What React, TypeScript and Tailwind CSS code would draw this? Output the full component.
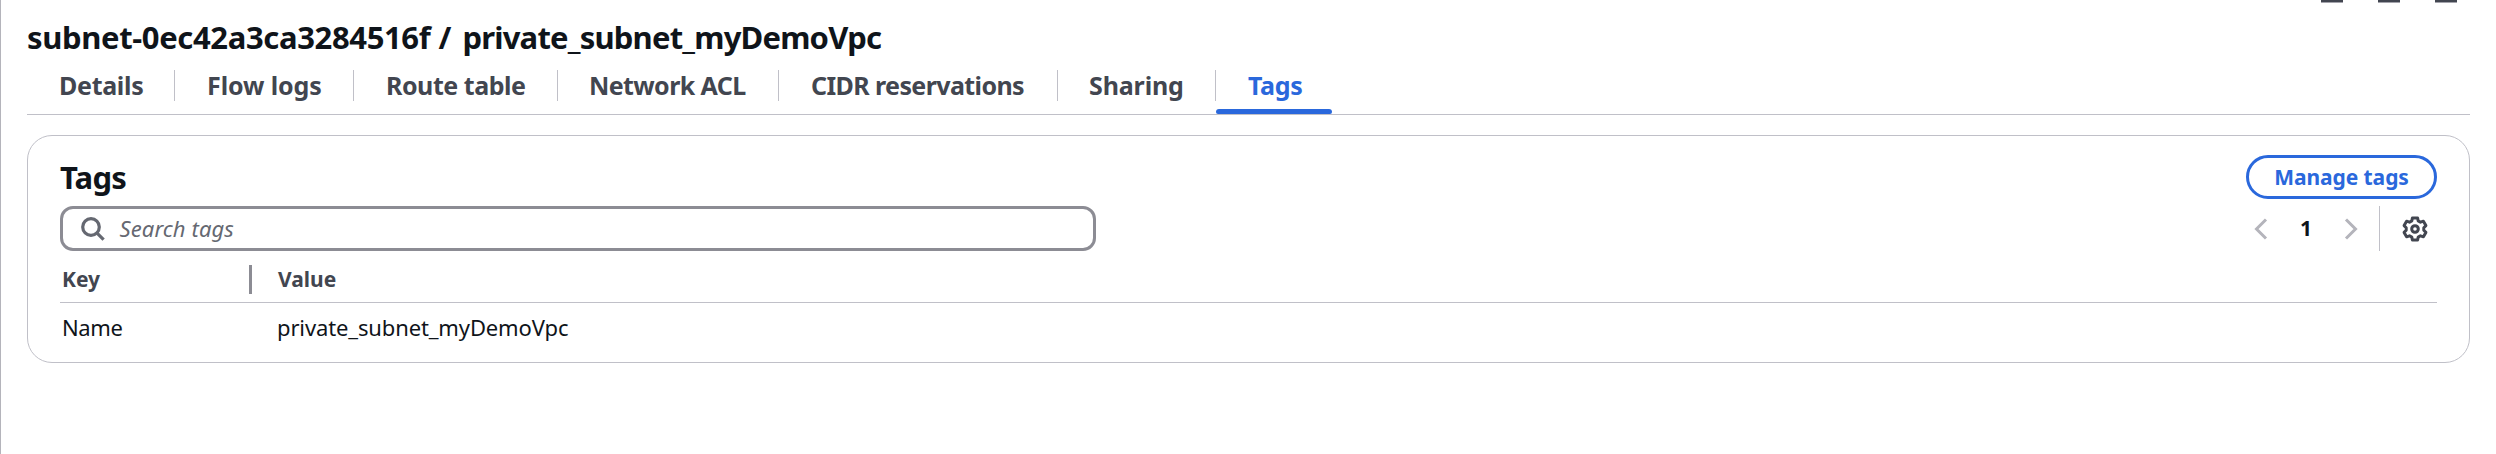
const tabs = [
  { label: "Details", box: "w-[148px] pl-[32px]", text: "tracking-[-0.3px]" },
  { label: "Flow logs", box: "w-[179px] pl-[32px]", text: "tracking-[-0.1px]" },
  { label: "Route table", box: "w-[204px] pl-[32px]", text: "tracking-[-0.46px]" },
  { label: "Network ACL", box: "w-[221px] pl-[31px]", text: "tracking-[-0.6px]" },
  { label: "CIDR reservations", box: "w-[279px] pl-[32px]", text: "tracking-[-0.6px]" },
  { label: "Sharing", box: "w-[158px] pl-[31px]", text: "tracking-[-0.13px]" },
];

function PanelControls() {
  return (
    <div className="absolute top-0 right-[39px] flex gap-[35px]">
      {[0, 1, 2].map((i) => (
        <span key={i} className="h-[3px] w-[22px] border-b border-[#a3a3ab] bg-[#424650]" />
      ))}
    </div>
  );
}

function SearchIcon() {
  return (
    <svg className="ml-[17.5px] h-[24px] w-[24px] shrink-0" viewBox="0 0 24 24" fill="none" stroke="#656871" strokeWidth="3.2">
      <circle cx="10" cy="10" r="8.3" />
      <path d="M15.8 15.8 22.6 22.6" />
    </svg>
  );
}

function Chevron({ d }: { d: string }) {
  return (
    <svg className="h-[22px] w-[14px]" viewBox="0 0 14 22" fill="none" stroke="#b4b4bb" strokeWidth="3">
      <path d={d} />
    </svg>
  );
}

function GearIcon() {
  return (
    <svg className="h-[26px] w-[26px]" viewBox="0 0 26 26" fill="none" stroke="#424650" strokeWidth="3" strokeLinejoin="round">
      <path d="M10.4 2h5.2l.6 2.9 2.3 1.3 2.9-1 2.5 4.4-2.1 2.1v2.6l2.1 2.1-2.5 4.4-2.9-1-2.3 1.3-.6 2.9h-5.2l-.6-2.9-2.3-1.3-2.9 1-2.5-4.4 2.1-2.1v-2.6L2.1 9.6l2.5-4.4 2.9 1 2.3-1.3z" />
      <circle cx="13" cy="13" r="3.3" />
    </svg>
  );
}

export default function App() {
  return (
    <main className="relative h-[454px] w-full overflow-hidden border-l border-[#b4b4bb] bg-white pr-[26px] pl-[26px] font-['Noto_Sans',sans-serif] text-[#0f141a]">
      <PanelControls />
      <h1 className="h-[70px] pt-[17px] text-[31px] leading-[40px] font-bold whitespace-nowrap">
        <span className="tracking-[-0.36px]">subnet-0ec42a3ca3284516f</span>
        <span className="mr-[3px]"> / </span>
        <span className="tracking-[-0.8px]">private_subnet_myDemoVpc</span>
      </h1>

      <nav className="flex h-[45px] border-b border-[#c0c0c8] text-[25px] leading-[30px] font-bold whitespace-nowrap text-[#424650]">
        {tabs.map((t) => (
          <div key={t.label} className={`h-[31px] shrink-0 border-r border-[#c0c0c8] ${t.box}`}>
            <span className={t.text}>{t.label}</span>
          </div>
        ))}
        <div className="flex w-[116px] shrink-0 flex-col justify-between text-[#2a68dc]">
          <span className="pl-[32px] tracking-[-0.35px]">Tags</span>
          <span className="h-[5px] rounded-t-[3px] rounded-b-[2px] bg-[#2a68dc]" />
        </div>
      </nav>

      <section className="mt-[20px] h-[228px] rounded-[25px] border border-[#c0c0c8] px-[32px] pt-[19px]">
        <header className="flex h-[51px] justify-between">
          <h2 className="pt-[2px] text-[31px] leading-[40px] font-bold tracking-[-0.8px]">Tags</h2>
          <button className="h-[44px] w-[191px] rounded-full border-[3px] border-[#2a68dc] text-[21px] leading-[38px] font-bold tracking-[-0.07px] text-[#2a68dc]">
            Manage tags
          </button>
        </header>

        <div className="flex h-[45px] items-center justify-between">
          <div className="flex h-[45px] w-[1036px] items-center rounded-[13px] border-[3px] border-[#8c8c94]">
            <SearchIcon />
            <span className="ml-[15px] text-[22px] leading-[39px] tracking-[0.1px] text-[#656871] italic">Search tags</span>
          </div>
          <div className="flex h-[45px] items-center">
            <Chevron d="M12 1.5 2.5 11 12 20.5" />
            <span className="w-[76px] text-center text-[21px] leading-[45px] font-bold">1</span>
            <Chevron d="M2 1.5 11.5 11 2 20.5" />
            <span className="ml-[21px] h-[45px] w-px bg-[#c0c0c8]" />
            <span className="mr-[9px] ml-[22px]">
              <GearIcon />
            </span>
          </div>
        </div>

        <div className="flex h-[52px] border-b border-[#c0c0c8] pt-[14px] text-[21px] leading-[29px] font-bold text-[#424650]">
          <div className="h-[29px] w-[192px] border-r-[3px] border-[#8c8c94] pl-[2px]">Key</div>
          <div className="pl-[26px]">Value</div>
        </div>
        <div className="flex pt-[8px] text-[22px] leading-[32px]">
          <div className="w-[216px] pl-[2px] tracking-[-0.4px]">Name</div>
          <div className="pl-px tracking-[-0.13px]">private_subnet_myDemoVpc</div>
        </div>
      </section>
    </main>
  );
}
